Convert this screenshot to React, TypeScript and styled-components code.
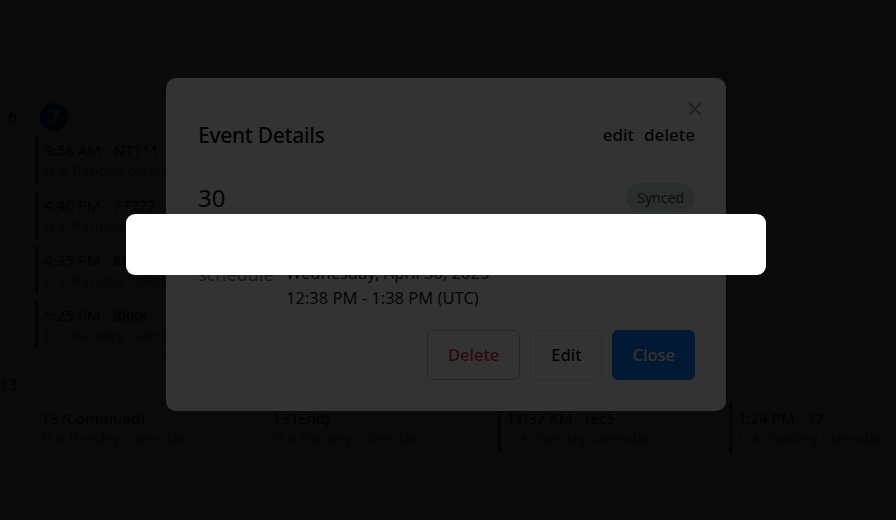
import React from 'react';
import styled, { createGlobalStyle } from 'styled-components';

const Global = createGlobalStyle`
  html, body { margin: 0; padding: 0; width: 100%; height: 100%; overflow: hidden; background: #ffffff; }
  body { font-family: "Noto Sans", "Liberation Sans", sans-serif; color: #212529; }
  #root { width: 100%; height: 100%; }
  * { box-sizing: border-box; }
`;

const Page = styled.div`
  position: relative;
  width: 100%;
  height: 100%;
  overflow: hidden;
  background: #ffffff;
`;

/* calendar, horizontally scrolled so that the first day column is mostly off-screen */
const Viewport = styled.div`
  width: 100%;
  height: 100%;
  overflow: hidden;
  padding-top: 89px;
`;

const MonthGrid = styled.div`
  display: grid;
  grid-template-columns: repeat(5, 231.33px);
  margin-left: -203.33px;
`;

const Cell = styled.div`
  border-top: 1px solid #dee2e6;
  border-right: 1px solid #dee2e6;
  padding: 13px 6px 7px 7px;
  display: flex;
  flex-direction: column;
  gap: 5px;
  min-height: 268px;
`;

const DayHead = styled.div<{ $align: 'left' | 'right' }>`
  height: 28px;
  margin-bottom: -1px;
  display: flex;
  align-items: center;
  justify-content: ${p => (p.$align === 'right' ? 'flex-end' : 'flex-start')};
  padding: ${p => (p.$align === 'right' ? '0 4px 0 0' : '0 0 0 5px')};
  font-size: 16px;
  color: #212529;
`;

const TodayBadge = styled.span`
  width: 28px;
  height: 28px;
  border-radius: 50%;
  background: #0b5ed7;
  color: #ffffff;
  font-weight: 600;
  display: inline-flex;
  align-items: center;
  justify-content: center;
`;

const EventCard = styled.div<{ $variant: 'accent' | 'outline' }>`
  height: 50px;
  border-radius: 4px;
  padding: 5px 6px 5px ${p => (p.$variant === 'accent' ? '6px' : '5px')};
  border: 1px solid ${p => (p.$variant === 'outline' ? '#dee2e6' : 'transparent')};
  border-left: ${p => (p.$variant === 'accent' ? '3px solid #0b5ed7' : '1px solid #dee2e6')};
  display: flex;
  flex-direction: column;
  justify-content: center;
  overflow: hidden;
  white-space: nowrap;
  font-size: 15px;
  line-height: 20px;
`;

const EventTitle = styled.div`
  color: #212529;
`;

const EventSub = styled.div`
  color: #6c757d;
`;

/* modal layers: each one dims everything beneath it */
const Layer = styled.div<{ $z: number }>`
  position: fixed;
  inset: 0;
  z-index: ${p => p.$z};
  background: rgba(0, 0, 0, 0.8);
  display: flex;
  align-items: center;
  justify-content: center;
  padding: 0 4px 32px 0;
`;

const Dialog = styled.div`
  position: relative;
  width: 560px;
  background: #ffffff;
  border-radius: 10px;
  padding: 24px 31px 31px 32px;
  display: flex;
  flex-direction: column;
`;

const CloseX = styled.button`
  position: absolute;
  top: 24px;
  right: 24px;
  width: 14px;
  height: 14px;
  padding: 0;
  border: none;
  background: transparent;
  display: flex;
`;

const Header = styled.div`
  margin-top: 18px;
  height: 30px;
  display: flex;
  align-items: center;
  justify-content: space-between;
`;

const Title = styled.h2`
  margin: 0;
  font-size: 21px;
  font-weight: 500;
  color: #111;
  letter-spacing: -0.3px;
`;

const HeaderActions = styled.div`
  display: flex;
  gap: 10px;
  font-size: 17px;
  font-weight: 500;
  color: #111;
`;

const NameRow = styled.div`
  margin-top: 33px;
  height: 30px;
  display: flex;
  align-items: center;
  justify-content: space-between;
`;

const EventName = styled.div`
  font-size: 24px;
  color: #111;
`;

const Pill = styled.span`
  height: 29px;
  padding: 0 11px;
  border-radius: 15px;
  background: #d1e7dd;
  color: #0f5132;
  font-size: 14px;
  display: inline-flex;
  align-items: center;
`;

const InfoRow = styled.div`
  margin-top: 47px;
  display: grid;
  grid-template-columns: 88px 1fr;
  line-height: 25px;
`;

const InfoLabel = styled.div`
  color: #7a7f85;
  font-size: 18px;
  padding-top: 2px;
`;

const InfoValue = styled.div`
  color: #212529;
  font-size: 16.5px;
`;

const Footer = styled.div`
  margin-top: 20px;
  display: flex;
  justify-content: flex-end;
  gap: 10px;
`;

const Btn = styled.button<{ $kind: 'danger' | 'plain' | 'primary' }>`
  height: 50px;
  padding: 0 ${p => (p.$kind === 'primary' ? '19px' : '20px')};
  border-radius: 6px;
  font-family: inherit;
  font-size: 16.5px;
  font-weight: 500;
  border: 1px solid
    ${p => (p.$kind === 'danger' ? '#f1aeb5' : p.$kind === 'plain' ? '#dee2e6' : '#0a7cff')};
  background: ${p => (p.$kind === 'primary' ? '#0a7cff' : '#ffffff')};
  color: ${p => (p.$kind === 'danger' ? '#dc3545' : p.$kind === 'plain' ? '#111' : '#ffffff')};
`;

const Toast = styled.div`
  width: 640px;
  height: 61px;
  background: #ffffff;
  border-radius: 9px;
`;

type Ev = { title?: string; sub?: string; variant: 'accent' | 'outline' };

const rows: { head: { text: string; today?: boolean; align: 'left' | 'right' } | null; events: Ev[] }[][] = [
  [
    { head: { text: '6', align: 'right' }, events: [] },
    {
      head: { text: '7', today: true, align: 'left' },
      events: [
        { title: '9:56 AM - NT111', sub: 'D K Pandey calendar', variant: 'accent' },
        { title: '4:46 PM - 77777', sub: 'D K Pandey calendar', variant: 'accent' },
        { title: '4:35 PM - 8888', sub: 'D K Pandey calendar', variant: 'accent' },
        { title: '5:25 PM - 8888', sub: 'D K Pandey calendar', variant: 'accent' },
      ],
    },
    { head: null, events: [] },
    { head: null, events: [] },
    { head: null, events: [] },
  ],
  [
    { head: { text: '13', align: 'right' }, events: [{ variant: 'outline' }] },
    { head: null, events: [{ title: '13 (Continued)', sub: 'D K Pandey calendar', variant: 'outline' }] },
    { head: null, events: [{ title: '13 (End)', sub: 'D K Pandey calendar', variant: 'outline' }] },
    { head: null, events: [{ title: '11:37 AM - rec5', sub: 'D K Pandey calendar', variant: 'accent' }] },
    { head: null, events: [{ title: '1:24 PM - 17', sub: 'D K Pandey calendar', variant: 'accent' }] },
  ],
];

export default function App() {
  return (
    <Page>
      <Global />
      <Viewport>
        <MonthGrid>
          {rows.flatMap((row, ri) =>
            row.map((cell, ci) => (
              <Cell key={`${ri}-${ci}`}>
                <DayHead $align={cell.head?.align ?? 'left'}>
                  {cell.head &&
                    (cell.head.today ? <TodayBadge>{cell.head.text}</TodayBadge> : cell.head.text)}
                </DayHead>
                {cell.events.map((ev, ei) => (
                  <EventCard key={ei} $variant={ev.variant}>
                    {ev.title && <EventTitle>{ev.title}</EventTitle>}
                    {ev.sub && <EventSub>{ev.sub}</EventSub>}
                  </EventCard>
                ))}
              </Cell>
            ))
          )}
        </MonthGrid>
      </Viewport>

      <Layer $z={10}>
        <Dialog>
          <CloseX aria-label="close">
            <svg width="14" height="14" viewBox="0 0 14 14">
              <path d="M1 1 L13 13 M13 1 L1 13" stroke="#8a8a8a" strokeWidth="1.5" fill="none" />
            </svg>
          </CloseX>
          <Header>
            <Title>Event Details</Title>
            <HeaderActions>
              <span>edit</span>
              <span>delete</span>
            </HeaderActions>
          </Header>
          <NameRow>
            <EventName>30</EventName>
            <Pill>Synced</Pill>
          </NameRow>
          <InfoRow>
            <InfoLabel>schedule</InfoLabel>
            <InfoValue>
              Wednesday, April 30, 2025
              <br />
              12:38 PM - 1:38 PM (UTC)
            </InfoValue>
          </InfoRow>
          <Footer>
            <Btn $kind="danger">Delete</Btn>
            <Btn $kind="plain">Edit</Btn>
            <Btn $kind="primary">Close</Btn>
          </Footer>
        </Dialog>
      </Layer>

      <Layer $z={20}>
        <Toast />
      </Layer>
    </Page>
  );
}
